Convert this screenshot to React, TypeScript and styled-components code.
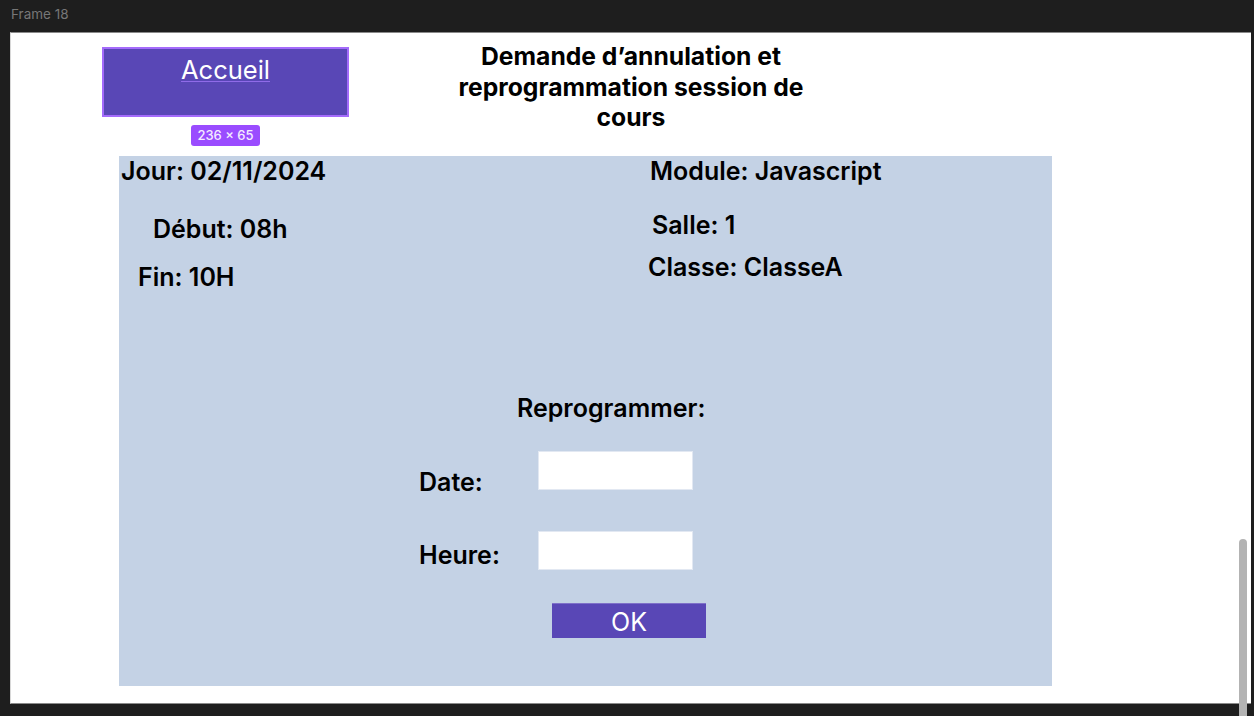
import React from "react";
import styled, { createGlobalStyle } from "styled-components";

const GlobalStyle = createGlobalStyle`
  html, body {
    margin: 0;
    padding: 0;
    background: #1e1e1e;
    font-family: Inter, "Noto Sans", Arial, sans-serif;
    overflow: hidden;
  }
  * { box-sizing: border-box; }
`;

const Canvas = styled.div`
  position: relative;
  width: 1254px;
  height: 716px;
  background: #1e1e1e;
  padding: 0 3px 0 10px;
  display: flex;
  flex-direction: column;
`;

const FrameLabel = styled.div`
  height: 32px;
  padding-top: 6px;
  padding-left: 1px;
  font-size: 13.5px;
  line-height: 16px;
  color: #777777;
`;

const Frame = styled.div`
  width: 1241px;
  height: 672px;
  background: #ffffff;
  border-top: 1px solid #8a8a8a;
  border-left: 1px solid #d8d8d8;
  border-bottom: 1px solid #8a8a8a;
  display: flex;
  flex-direction: column;
`;

const Header = styled.div`
  display: flex;
  height: 123px;
  padding-left: 91px;
`;

const NavColumn = styled.div`
  width: 247px;
  padding-top: 14px;
  display: flex;
  flex-direction: column;
  align-items: center;
`;

const HomeButton = styled.button`
  width: 247px;
  height: 70px;
  background: #5947b6;
  border: 2px solid #a46bfb;
  color: #ffffff;
  font-family: inherit;
  font-size: 25.5px;
  line-height: 30px;
  padding: 6px 0 0;
  display: flex;
  justify-content: center;
  align-items: flex-start;
  cursor: pointer;
`;

const HomeLabel = styled.span`
  text-decoration: underline;
  text-decoration-color: #8f6be8;
  text-decoration-thickness: 1px;
  text-underline-offset: 2px;
`;

const SizeBadge = styled.div`
  margin-top: 8px;
  height: 21px;
  padding: 0 6px;
  border-radius: 3px;
  background: #9a4cff;
  color: #f4ecff;
  font-size: 13px;
  font-weight: 500;
  line-height: 21px;
`;

const Title = styled.h1`
  margin: 8px 0 0 92px;
  width: 380px;
  text-align: center;
  font-size: 24.7px;
  font-weight: 700;
  line-height: 30.5px;
  color: #000000;
`;

const Panel = styled.section`
  margin-left: 108px;
  width: 933px;
  height: 530px;
  background: #c4d2e5;
  padding-top: 2px;
  display: flex;
  flex-direction: column;
`;

const InfoGrid = styled.div`
  display: grid;
  grid-template-columns: 521px 1fr;
`;

const InfoColumn = styled.div`
  display: flex;
  flex-direction: column;
  align-items: flex-start;
`;

const InfoLine = styled.div<{ $indent: number; $gap: number }>`
  margin-left: ${(p) => p.$indent}px;
  margin-top: ${(p) => p.$gap}px;
  font-size: 25px;
  font-weight: 600;
  line-height: 26px;
  color: #000000;
  white-space: nowrap;
`;

const Reschedule = styled.div`
  margin-top: 105px;
  padding-left: 300px;
  display: flex;
  flex-direction: column;
  align-items: flex-start;
`;

const SectionTitle = styled.h2`
  margin: 0 0 0 98px;
  font-size: 25px;
  font-weight: 600;
  line-height: 26px;
  color: #000000;
`;

const FieldRow = styled.div<{ $gap: number }>`
  display: flex;
  align-items: flex-start;
  height: 39px;
  margin-top: ${(p) => p.$gap}px;
`;

const FieldLabel = styled.label<{ $offset: number }>`
  width: 119px;
  margin-top: ${(p) => p.$offset}px;
  font-size: 25px;
  font-weight: 600;
  line-height: 26px;
  color: #000000;
`;

const FieldInput = styled.input`
  width: 155px;
  height: 39px;
  border: 1px solid #e2e8f2;
  background: #ffffff;
  outline: none;
  padding: 0 8px;
  font-family: inherit;
  font-size: 16px;
`;

const OkButton = styled.button`
  margin: 33px 0 0 133px;
  width: 154px;
  height: 35px;
  background: #5947b6;
  border: none;
  border-top: 1px solid #7f70c9;
  color: #ffffff;
  font-family: inherit;
  font-size: 25px;
  line-height: 26px;
  padding: 5px 0 0;
  display: flex;
  justify-content: center;
  align-items: flex-start;
  cursor: pointer;
`;

const Scrollbar = styled.div`
  position: absolute;
  left: 1239px;
  top: 539px;
  width: 8px;
  height: 177px;
  border-radius: 4px 4px 0 0;
  background: #b3b3b3;
`;

export default function App() {
  return (
    <>
      <GlobalStyle />
      <Canvas>
        <FrameLabel>Frame 18</FrameLabel>
        <Frame>
          <Header>
            <NavColumn>
              <HomeButton>
                <HomeLabel>Accueil</HomeLabel>
              </HomeButton>
              <SizeBadge>236 × 65</SizeBadge>
            </NavColumn>
            <Title>
              Demande d’annulation et reprogrammation session de cours
            </Title>
          </Header>
          <Panel>
            <InfoGrid>
              <InfoColumn>
                <InfoLine $indent={2} $gap={0}>Jour: 02/11/2024</InfoLine>
                <InfoLine $indent={34} $gap={32}>Début: 08h</InfoLine>
                <InfoLine $indent={19} $gap={22}>Fin: 10H</InfoLine>
              </InfoColumn>
              <InfoColumn>
                <InfoLine $indent={10} $gap={0}>Module: Javascript</InfoLine>
                <InfoLine $indent={12} $gap={28}>Salle: 1</InfoLine>
                <InfoLine $indent={8} $gap={16}>Classe: ClasseA</InfoLine>
              </InfoColumn>
            </InfoGrid>
            <Reschedule>
              <SectionTitle>Reprogrammer:</SectionTitle>
              <FieldRow $gap={30}>
                <FieldLabel $offset={18}>Date:</FieldLabel>
                <FieldInput aria-label="Date" />
              </FieldRow>
              <FieldRow $gap={41}>
                <FieldLabel $offset={11}>Heure:</FieldLabel>
                <FieldInput aria-label="Heure" />
              </FieldRow>
              <OkButton>OK</OkButton>
            </Reschedule>
          </Panel>
        </Frame>
        <Scrollbar />
      </Canvas>
    </>
  );
}
